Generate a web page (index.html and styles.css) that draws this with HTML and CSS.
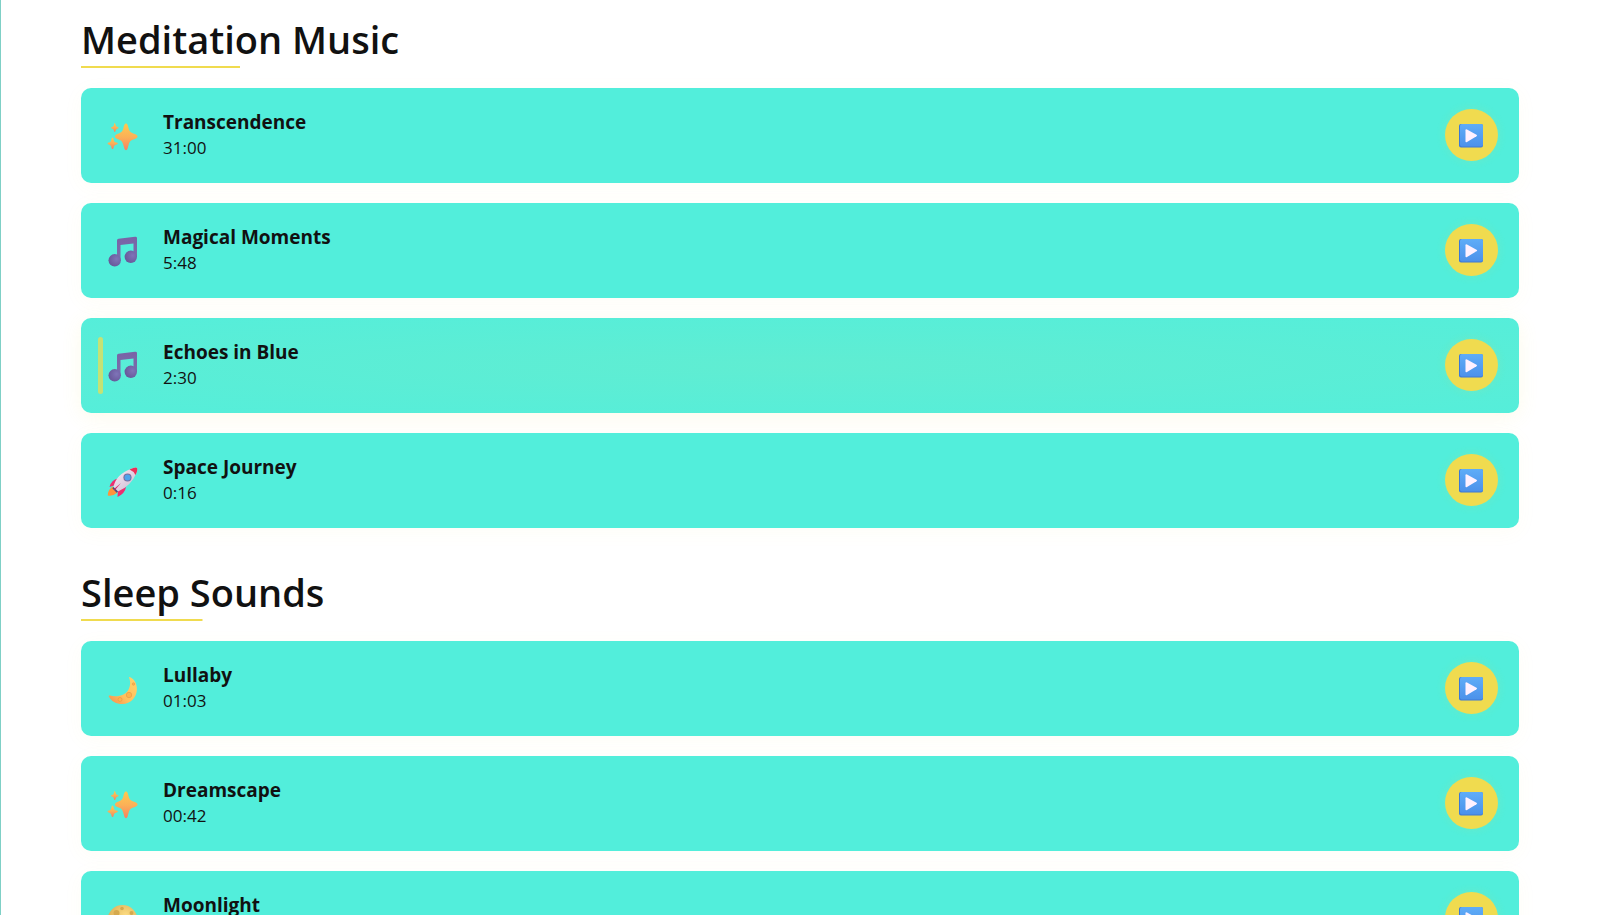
FILE: index.html
```
<!DOCTYPE html>
<html lang="en">
<head>
<meta charset="utf-8">
<title>Meditation Music</title>
<link rel="stylesheet" href="styles.css">
</head>
<body>
<svg class="defs" aria-hidden="true">
  <defs>
    <linearGradient id="gold" x1="0" y1="0" x2="0" y2="1"><stop offset="0" stop-color="#ffc94f"/><stop offset=".5" stop-color="#fbb157"/><stop offset="1" stop-color="#f58262"/></linearGradient>
    <linearGradient id="purple" x1="0" y1="0" x2="0" y2="1"><stop offset="0" stop-color="#7a62a6"/><stop offset="1" stop-color="#7771ac"/></linearGradient>
    <radialGradient id="note" cx=".65" cy=".4" r=".65"><stop offset="0" stop-color="#7f74b8"/><stop offset="1" stop-color="#68589a"/></radialGradient>
    <linearGradient id="blue" x1="0" y1="0" x2="0" y2="1"><stop offset="0" stop-color="#5fadf8"/><stop offset="1" stop-color="#4c91ea"/></linearGradient>
    <linearGradient id="hull" x1="0" y1="0" x2="1" y2="1"><stop offset="0" stop-color="#fbeef8"/><stop offset="1" stop-color="#c9b6ce"/></linearGradient>
    <linearGradient id="moon" x1="1" y1="0" x2="0" y2="1"><stop offset="0" stop-color="#ffd36b"/><stop offset=".6" stop-color="#ffc05c"/><stop offset="1" stop-color="#f58c50"/></linearGradient>
    <radialGradient id="full" cx=".6" cy=".35" r=".7"><stop offset="0" stop-color="#fddc82"/><stop offset="1" stop-color="#d6a950"/></radialGradient>
    <symbol id="sparkles" viewBox="0 0 32 32"><g fill="url(#gold)"><path d="M20 2.500C21.500 2.500 21.700 4 22.500 7C23.400 10.700 24.500 11.500 28 12.800C30.300 13.600 31.500 14.200 31.500 15.500C31.500 17 30.300 17.400 28 18.200C24.800 19.300 23.800 20 22.700 23.500C21.700 27 21.500 29.200 20 29.200C18.500 29.200 18.200 27 17.200 23.500C16.200 20.200 15.300 19.300 12 18.200C10 17.400 9 17 9 15.500C9 14.200 10 13.600 12 12.800C15.500 11.500 16.500 10.600 17.400 7C18.200 4 18.500 2.500 20 2.500Z"/><path d="M8.700 2C9.500 2.300 9.700 5 10.500 5.600C11.200 6.200 12.600 6.200 12.600 6.800C12.600 7.500 11.200 7.700 10.500 8.200C9.700 9 9.500 11 8.700 11C8 11 8 9 7.200 8.200C6.500 7.700 5 7.500 5 6.800C5 6.200 6.500 6.200 7.200 5.600C8 5 8 2.300 8.700 2Z"/><path d="M6.500 16.500C7.600 16.500 7.600 19.700 8.500 20.700C9.400 21.500 12 21.500 12 22.500C12 23.500 9.400 23.600 8.500 24.400C7.600 25.300 7.600 28 6.600 28C5.500 28 5.500 25.300 4.600 24.400C3.700 23.600 1.500 23.500 1.500 22.500C1.500 21.500 3.700 21.500 4.600 20.700C5.500 19.700 5.500 16.500 6.500 16.500Z"/></g></symbol>
    <symbol id="music" viewBox="0 0 32 32"><path d="M11 4.500Q11 3 12.500 2.800L29 .7Q31 .5 31 2V21H27.500V7.500L14.500 9V24.500H11Z" fill="url(#purple)"/><circle cx="8.700" cy="24.300" r="6.200" fill="url(#note)"/><circle cx="24.800" cy="20.800" r="6.200" fill="url(#note)"/></symbol>
    <symbol id="rocket" viewBox="0 0 32 32"><path d="M6.500 20.500Q1.500 24.500 1.800 29.500Q7 30.500 11.500 26.500Z" fill="#ff933b"/><path d="M12 12.500Q5.500 13.500 3.500 21L11 18.500ZM20 21Q19 27.500 11.500 31L12 24Z" fill="#ed2e70"/><path d="M7.500 21Q10 8 26 2.500Q30 1 31 2Q32 4 30.500 7Q25 20 12 25.500Z" fill="url(#hull)"/><path d="M23.500 3.500Q30 .6 31 2Q32 4 29.500 9Q27.500 5 23.500 3.500Z" fill="#ed2e58"/><path d="M7.500 21L12 25.500L10.700 26.700L6.300 22.300Z" fill="#53477c"/><path d="M15 17L9 24L8 23Z" fill="#d42768"/><circle cx="21.500" cy="11.500" r="4.100" fill="#7a6d9e"/><circle cx="21.500" cy="11.500" r="3" fill="#4da3eb"/></symbol>
    <symbol id="crescent" viewBox="0 0 32 32"><path d="M23.500 3C28 4.500 31 9.500 30.900 15.500C30.600 23.500 24.500 30 16.500 30C10.500 30 5 27.300 2.700 22.200C2.500 21.300 3.300 21.300 4 21.600C11 23.500 20 21.500 22.800 15C24.500 11.200 24.600 7.500 23.200 4Q22.700 2.800 23.500 3Z" fill="url(#moon)"/><g fill="#ffb44d" stroke="#e99c49" stroke-width=".7"><circle cx="23" cy="21" r="2.700"/><circle cx="14" cy="25.500" r="2"/><circle cx="27.500" cy="10" r="1.200"/></g></symbol>
    <symbol id="fullmoon" viewBox="0 0 32 32"><circle cx="16.500" cy="16" r="15" fill="url(#full)"/><g fill="#d5a94e"><circle cx="16" cy="4.500" r="1.800"/><circle cx="10.500" cy="9" r="3"/><circle cx="25.500" cy="9" r="2"/><circle cx="18" cy="18" r="4"/></g></symbol>
    <symbol id="play" viewBox="0 0 24 24"><rect x="0" y="0" width="24" height="23.500" rx="2" fill="#3e79d4"/><rect x="1" y="0" width="23" height="22.500" rx="2" fill="url(#blue)"/><path d="M6.500 6.200Q6.500 4.700 8 5.500L17.500 10.700Q18.800 11.500 17.500 12.300L8 18Q6.500 18.800 6.500 17.300Z" fill="#fff1ff"/></symbol>
  </defs>
</svg>
<main class="library">
  <section class="group">
    <h2 class="group-title">Meditation Music</h2>
    <ul class="tracks">
      <li class="track"><svg class="track-icon" aria-hidden="true"><use href="#sparkles"/></svg><div class="track-info"><h3 class="track-name">Transcendence</h3><p class="track-time">31:00</p></div><button class="play" type="button" aria-label="Play Transcendence"><svg class="play-icon"><use href="#play"/></svg></button></li>
      <li class="track"><svg class="track-icon" aria-hidden="true"><use href="#music"/></svg><div class="track-info"><h3 class="track-name">Magical Moments</h3><p class="track-time">5:48</p></div><button class="play" type="button" aria-label="Play Magical Moments"><svg class="play-icon"><use href="#play"/></svg></button></li>
      <li class="track active"><svg class="track-icon" aria-hidden="true"><use href="#music"/></svg><div class="track-info"><h3 class="track-name">Echoes in Blue</h3><p class="track-time">2:30</p></div><button class="play" type="button" aria-label="Play Echoes in Blue"><svg class="play-icon"><use href="#play"/></svg></button></li>
      <li class="track"><svg class="track-icon" aria-hidden="true"><use href="#rocket"/></svg><div class="track-info"><h3 class="track-name">Space Journey</h3><p class="track-time">0:16</p></div><button class="play" type="button" aria-label="Play Space Journey"><svg class="play-icon"><use href="#play"/></svg></button></li>
    </ul>
  </section>
  <section class="group">
    <h2 class="group-title">Sleep Sounds</h2>
    <ul class="tracks">
      <li class="track"><svg class="track-icon" aria-hidden="true"><use href="#crescent"/></svg><div class="track-info"><h3 class="track-name">Lullaby</h3><p class="track-time">01:03</p></div><button class="play" type="button" aria-label="Play Lullaby"><svg class="play-icon"><use href="#play"/></svg></button></li>
      <li class="track"><svg class="track-icon" aria-hidden="true"><use href="#sparkles"/></svg><div class="track-info"><h3 class="track-name">Dreamscape</h3><p class="track-time">00:42</p></div><button class="play" type="button" aria-label="Play Dreamscape"><svg class="play-icon"><use href="#play"/></svg></button></li>
      <li class="track"><svg class="track-icon" aria-hidden="true"><use href="#fullmoon"/></svg><div class="track-info"><h3 class="track-name">Moonlight</h3></div><button class="play" type="button" aria-label="Play Moonlight"><svg class="play-icon"><use href="#play"/></svg></button></li>
    </ul>
  </section>
</main>
</body>
</html>
```
FILE: styles.css
```
* {
  box-sizing: border-box;
}

html {
  height: 100%;
}

body {
  height: 100%;
  margin: 0;
  overflow: hidden;
  background: #fff;
  color: #111;
  font-family: "Open Sans", "Noto Sans", sans-serif;
}

.defs {
  position: absolute;
  width: 0;
  height: 0;
}

.library {
  display: flex;
  flex-direction: column;
  gap: 40px;
  min-height: 100%;
  padding: 15px 88px 20px 80px;
  border-left: 1px solid #7fd0c6;
}

.group {
  display: flex;
  flex-direction: column;
  align-items: flex-start;
  gap: 20px;
}

.group-title {
  margin: 0;
  padding-bottom: 5px;
  background: linear-gradient(#f0db4f, #f0db4f) left bottom / 50% 2px no-repeat;
  font-size: 38px;
  font-weight: 600;
  line-height: 48px;
}

.tracks {
  display: flex;
  flex-direction: column;
  gap: 20px;
  width: 100%;
  margin: 0;
  padding: 0;
  list-style: none;
}

.track {
  position: relative;
  display: flex;
  align-items: center;
  min-height: 95px;
  padding: 20px 21px 21px 25px;
  border-radius: 10px;
  background: #52eedb;
  box-shadow: 0 4px 20px rgba(240, 219, 79, 0.05);
}

.track.active {
  background: radial-gradient(ellipse at center, #60edd2, #55eeda);
  box-shadow: 0 4px 20px rgba(240, 219, 79, 0.12);
}

.track.active::before {
  content: "";
  position: absolute;
  top: 19px;
  bottom: 19px;
  left: 17px;
  width: 5px;
  border-radius: 3px;
  background: #c5e275;
}

.track-icon {
  flex: none;
  width: 32px;
  height: 32px;
  margin-top: 3px;
}

.track-info {
  flex: 1;
  min-height: 53px;
  margin-left: 25px;
}

.track-name {
  margin: 0;
  font-size: 19px;
  font-weight: 700;
  line-height: 26px;
}

.track-time {
  margin: 0;
  font-size: 17px;
  line-height: 26px;
}

.play {
  display: flex;
  align-items: center;
  justify-content: center;
  width: 53px;
  height: 52px;
  padding: 1px 1px 0 0;
  border: 0;
  border-radius: 50%;
  background: #f0db4f;
  box-shadow: 0 0 10px rgba(240, 219, 79, 0.15);
}

.play-icon {
  width: 24px;
  height: 24px;
}
```
